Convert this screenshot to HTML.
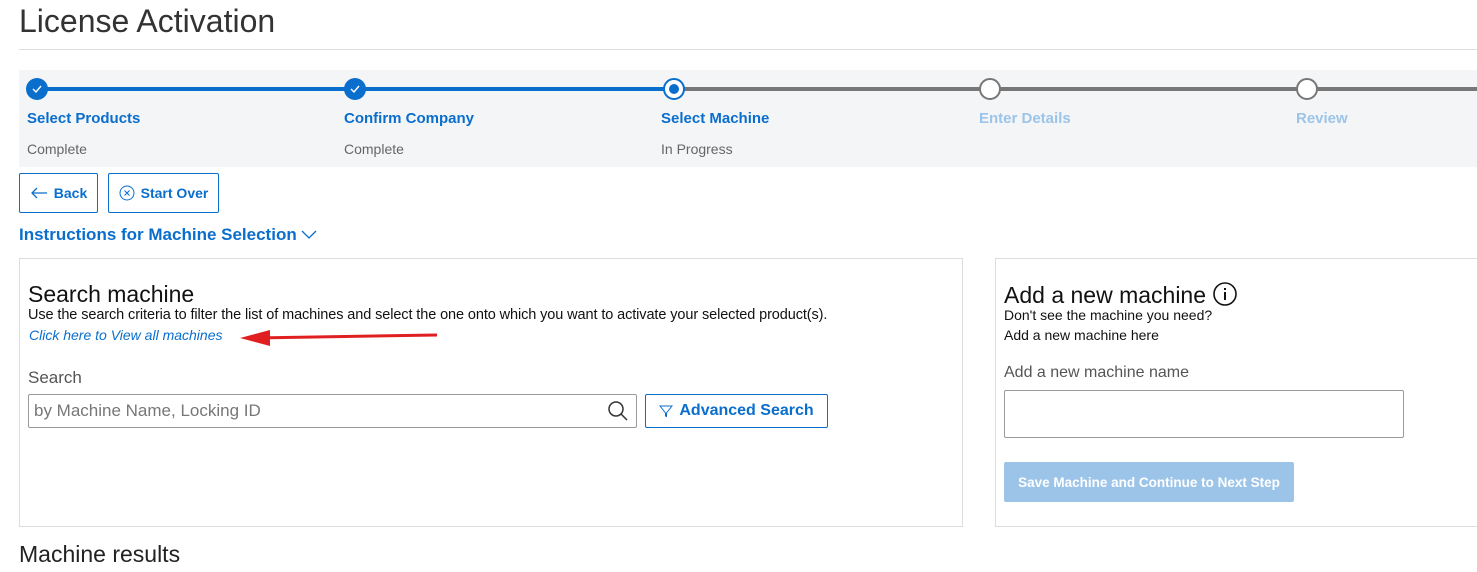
<!DOCTYPE html>
<html><head><meta charset="utf-8"><style>
*{box-sizing:border-box;margin:0;padding:0}
body{width:1477px;height:572px;overflow:hidden;background:#fff;font-family:"Liberation Sans",sans-serif;color:#222;position:relative}
.a{position:absolute;white-space:nowrap}
.blue{color:#0a6ecd}
.btn{position:absolute;border:1px solid #0a6ecd;border-radius:2px;color:#0a6ecd;font-size:14px;font-weight:bold;display:flex;align-items:center;justify-content:center}
</style></head><body>
<div class="a" style="left:19px;top:3px;font-size:32px;color:#333">License Activation</div>
<div class="a" style="left:19px;top:49px;width:1458px;height:1px;background:#ddd"></div>
<div class="a" style="left:19px;top:70px;width:1458px;height:97px;background:#f4f5f7"></div>
<svg class="a" style="left:0;top:70px" width="1477" height="40">
<line x1="37" y1="19" x2="674" y2="19" stroke="#0a6ecd" stroke-width="4"/>
<line x1="674" y1="19" x2="1477" y2="19" stroke="#777" stroke-width="4"/>
<circle cx="37" cy="19" r="11" fill="#0a6ecd"/><path d="M33 19l3 3 5-6" stroke="#fff" stroke-width="1.4" fill="none"/>
<circle cx="355" cy="19" r="11" fill="#0a6ecd"/><path d="M351 19l3 3 5-6" stroke="#fff" stroke-width="1.4" fill="none"/>
<circle cx="674" cy="19" r="10" fill="#fff" stroke="#0a6ecd" stroke-width="2"/><circle cx="674" cy="19" r="5" fill="#0a6ecd"/>
<circle cx="990" cy="19" r="10" fill="#fff" stroke="#777" stroke-width="2"/>
<circle cx="1307" cy="19" r="10" fill="#fff" stroke="#777" stroke-width="2"/>
</svg>
<div class="a blue" style="left:27px;top:110px;font-size:15px;font-weight:bold">Select Products</div>
<div class="a blue" style="left:344px;top:110px;font-size:15px;font-weight:bold">Confirm Company</div>
<div class="a blue" style="left:661px;top:110px;font-size:15px;font-weight:bold">Select Machine</div>
<div class="a" style="left:979px;top:110px;font-size:15px;font-weight:bold;color:#9cc4e8">Enter Details</div>
<div class="a" style="left:1296px;top:110px;font-size:15px;font-weight:bold;color:#9cc4e8">Review</div>
<div class="a" style="left:27px;top:141px;font-size:14px;color:#666">Complete</div>
<div class="a" style="left:344px;top:141px;font-size:14px;color:#666">Complete</div>
<div class="a" style="left:661px;top:141px;font-size:14px;color:#666">In Progress</div>
<div class="btn" style="left:19px;top:173px;width:79px;height:40px">
<svg width="18" height="12" style="margin-right:6px"><path d="M17 6H2M7 1L2 6l5 5" stroke="#0a6ecd" stroke-width="1.3" fill="none"/></svg>Back</div>
<div class="btn" style="left:108px;top:173px;width:111px;height:40px">
<svg width="16" height="16" style="margin-right:6px"><circle cx="8" cy="8" r="7" stroke="#0a6ecd" fill="none"/><path d="M5.5 5.5l5 5M10.5 5.5l-5 5" stroke="#0a6ecd"/></svg>Start Over</div>
<div class="a blue" style="left:19px;top:225px;font-size:17px;font-weight:bold">Instructions for Machine Selection <svg width="16" height="10"><path d="M1 1l7 7 7-7" stroke="#0a6ecd" fill="none" stroke-width="1.3"/></svg></div>
<div class="a" style="left:19px;top:258px;width:944px;height:269px;border:1px solid #ddd"></div>
<div class="a" style="left:995px;top:258px;width:490px;height:269px;border:1px solid #ddd"></div>
<div class="a" style="left:28px;top:281px;font-size:23px;color:#111">Search machine</div>
<div class="a" style="left:28px;top:307px;font-size:14.5px;color:#111;letter-spacing:-0.1px">Use the search criteria to filter the list of machines and select the one onto which you want to activate your selected product(s).</div>
<div class="a blue" style="left:29px;top:327px;font-size:14px;font-style:italic">Click here to View all machines</div>
<svg class="a" style="left:230px;top:325px" width="215" height="24"><path d="M437 10L252 13" stroke="#e02020" stroke-width="3" transform="translate(-230,0)"/><path d="M10 13l30-8v16z" fill="#e02020"/></svg>
<div class="a" style="left:28px;top:368px;font-size:17px;color:#555">Search</div>
<div class="a" style="left:28px;top:394px;width:609px;height:34px;border:1px solid #999;border-radius:2px"></div>
<div class="a" style="left:34px;top:401px;font-size:17px;color:#777">by Machine Name, Locking ID</div>
<svg class="a" style="left:607px;top:400px" width="22" height="22"><circle cx="9" cy="9" r="7" stroke="#333" stroke-width="1.5" fill="none"/><path d="M14 14l6 6" stroke="#333" stroke-width="1.5"/></svg>
<div class="btn" style="left:645px;top:394px;width:183px;height:34px;font-size:16px">
<svg width="14" height="12" style="margin-right:6px"><path d="M1 1h12L7.5 8v3.5L6.5 11V8z" stroke="#0a6ecd" fill="none"/></svg>Advanced Search</div>
<div class="a" style="left:1004px;top:281px;font-size:23px;color:#111">Add a new machine <svg width="26" height="26" style="vertical-align:-4px"><circle cx="13" cy="13" r="11" stroke="#111" stroke-width="1.6" fill="none"/><rect x="12" y="11" width="2" height="8" fill="#111"/><rect x="12" y="7" width="2" height="2" fill="#111"/></svg></div>
<div class="a" style="left:1004px;top:307px;font-size:14px;color:#111">Don't see the machine you need?</div>
<div class="a" style="left:1004px;top:327px;font-size:14px;color:#111">Add a new machine here</div>
<div class="a" style="left:1004px;top:364px;font-size:16px;color:#555">Add a new machine name</div>
<div class="a" style="left:1004px;top:390px;width:400px;height:48px;border:1px solid #999;border-radius:2px"></div>
<div class="a" style="left:1004px;top:462px;width:290px;height:40px;background:#9cc4e8;border-radius:2px;color:#fff;font-size:13.5px;font-weight:bold;display:flex;align-items:center;justify-content:center">Save Machine and Continue to Next Step</div>
<div class="a" style="left:19px;top:541px;font-size:23px;color:#222">Machine results</div>
</body></html>
